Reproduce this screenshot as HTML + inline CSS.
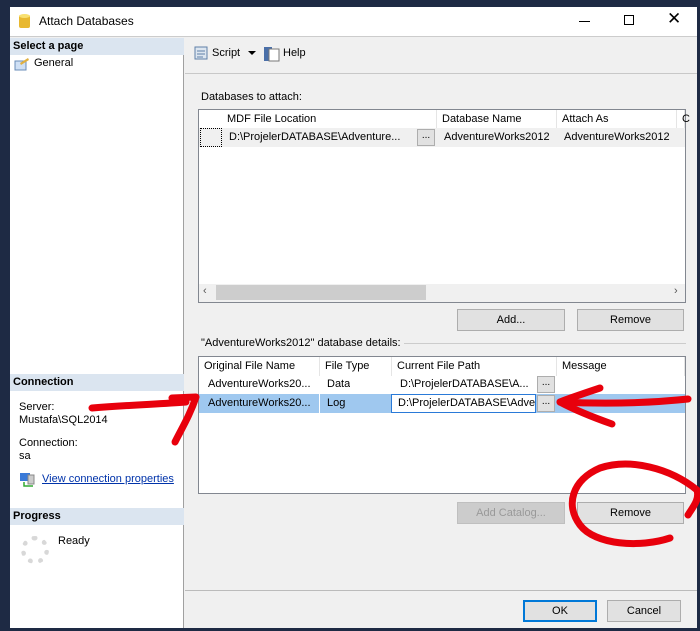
<!DOCTYPE html>
<html><head><meta charset="utf-8"><style>
*{box-sizing:border-box;margin:0;padding:0}
body{width:700px;height:631px;background:#1e2a44;font-family:"Liberation Sans",sans-serif;font-size:11px;color:#000;position:relative;overflow:hidden}
.a{position:absolute}
.btn{position:absolute;background:#e1e1e1;border:1px solid #adadad;text-align:center;line-height:20px;font-size:11px}
.hd{position:absolute;background:#fff;border-right:1px solid #e5e5e5;line-height:19px;padding-left:5px;height:19px}
.cell{position:absolute;line-height:19px;height:19px;padding-left:5px;white-space:nowrap;overflow:hidden}
.dots{position:absolute;width:18px;height:17px;background:#e1e1e1;border:1px solid #adadad;font-size:10px;text-align:center;line-height:12px}
</style></head><body>
<div class="a" style="left:10px;top:7px;width:687px;height:621px;background:#f0f0f0"></div>
<!-- title -->
<div class="a" style="left:10px;top:7px;width:687px;height:30px;background:#fff;border-bottom:1px solid #ccc"></div>
<svg class="a" style="left:18px;top:13px" width="14" height="17"><rect x="1" y="2" width="11" height="13" rx="2" fill="#e8b830"/><ellipse cx="6.5" cy="3" rx="5.5" ry="2" fill="#f8e070"/></svg>
<div class="a" style="left:39px;top:14px;font-size:12px">Attach Databases</div>
<div class="a" style="left:579px;top:21px;width:11px;height:1px;background:#000"></div>
<div class="a" style="left:624px;top:15px;width:10px;height:10px;border:1px solid #000"></div>
<div class="a" style="left:667px;top:9px;font-size:17px;font-weight:300">✕</div>
<!-- left panel -->
<div class="a" style="left:10px;top:38px;width:174px;height:590px;background:#fff;border-right:1px solid #a0a0a0"></div>
<div class="a" style="left:10px;top:38px;width:174px;height:17px;background:#dbe5f0;font-weight:bold;padding-left:3px;line-height:17px">Select a page</div>
<svg class="a" style="left:14px;top:57px" width="16" height="14"><rect x="1" y="4" width="11" height="9" fill="#cfe0f5" stroke="#6a8cb8"/><path d="M6 6l8-5 1 2-8 5z" fill="#e0b040"/></svg>
<div class="a" style="left:34px;top:57px">General</div>
<div class="a" style="left:10px;top:374px;width:174px;height:17px;background:#dbe5f0;font-weight:bold;padding-left:3px;line-height:17px">Connection</div>
<div class="a" style="left:19px;top:401px;line-height:13px">Server:<br>Mustafa\SQL2014</div>
<div class="a" style="left:19px;top:437px;line-height:13px">Connection:<br>sa</div>
<svg class="a" style="left:19px;top:472px" width="18" height="16"><rect x="1" y="1" width="10" height="8" fill="#3a7ad8"/><rect x="9" y="3" width="6" height="9" fill="#ccc" stroke="#888"/><path d="M5 10v4h9" stroke="#3a3" fill="none" stroke-width="1.5"/></svg>
<div class="a" style="left:42px;top:473px;color:#0033aa;text-decoration:underline">View connection properties</div>
<div class="a" style="left:10px;top:508px;width:174px;height:17px;background:#dbe5f0;font-weight:bold;padding-left:3px;line-height:17px">Progress</div>
<div class="a" style="left:21px;top:536px;width:28px;height:28px;border-radius:50%;border:5px dotted #d8d8d8"></div>
<div class="a" style="left:58px;top:535px">Ready</div>
<!-- toolbar -->
<div class="a" style="left:185px;top:73px;width:512px;height:1px;background:#c8c8c8"></div>
<svg class="a" style="left:192px;top:45px" width="18" height="18"><path d="M3 2h12v12H3z" fill="#dde6f0" stroke="#6080a8"/><path d="M5 6h8M5 9h8M5 12h6" stroke="#6080a8"/></svg>
<div class="a" style="left:212px;top:47px">Script</div>
<div class="a" style="left:248px;top:51px;border:4px solid transparent;border-top:4px solid #000"></div>
<svg class="a" style="left:263px;top:45px" width="18" height="18"><rect x="1" y="2" width="8" height="14" fill="#4a6fa8"/><rect x="6" y="4" width="10" height="12" fill="#fff" stroke="#777"/></svg>
<div class="a" style="left:283px;top:47px">Help</div>
<!-- grid1 -->
<div class="a" style="left:201px;top:91px">Databases to attach:</div>
<div class="a" style="left:198px;top:109px;width:488px;height:194px;background:#fff;border:1px solid #828790"></div>
<div class="hd" style="left:222px;top:110px;width:215px">MDF File Location</div>
<div class="hd" style="left:437px;top:110px;width:120px">Database Name</div>
<div class="hd" style="left:557px;top:110px;width:120px">Attach As</div>
<div class="hd" style="left:677px;top:110px;width:8px">C</div>
<div class="a" style="left:199px;top:128px;width:486px;height:19px;background:#f0f0f0"></div>
<div class="a" style="left:200px;top:128px;width:22px;height:19px;border:1px dotted #000"></div>
<div class="cell" style="left:224px;top:128px">D:\ProjelerDATABASE\Adventure...</div>
<div class="dots" style="left:417px;top:129px">...</div>
<div class="cell" style="left:439px;top:128px">AdventureWorks2012</div>
<div class="cell" style="left:559px;top:128px">AdventureWorks2012</div>
<div class="a" style="left:199px;top:284px;width:486px;height:18px;background:#f0f0f0"></div>
<div class="a" style="left:216px;top:285px;width:210px;height:15px;background:#cdcdcd"></div>
<div class="a" style="left:203px;top:285px;color:#555">‹</div>
<div class="a" style="left:674px;top:285px;color:#555">›</div>
<div class="btn" style="left:457px;top:309px;width:108px;height:22px">Add...</div>
<div class="btn" style="left:577px;top:309px;width:107px;height:22px">Remove</div>
<!-- grid2 -->
<div class="a" style="left:201px;top:337px;background:#f0f0f0;padding-right:4px">"AdventureWorks2012" database details:</div>
<div class="a" style="left:404px;top:343px;width:282px;height:1px;background:#ccc;z-index:-0"></div>
<div class="a" style="left:198px;top:356px;width:488px;height:138px;background:#fff;border:1px solid #828790"></div>
<div class="hd" style="left:199px;top:357px;width:121px">Original File Name</div>
<div class="hd" style="left:320px;top:357px;width:72px">File Type</div>
<div class="hd" style="left:392px;top:357px;width:165px">Current File Path</div>
<div class="hd" style="left:557px;top:357px;width:128px">Message</div>
<div class="cell" style="left:203px;top:375px">AdventureWorks20...</div>
<div class="cell" style="left:322px;top:375px">Data</div>
<div class="cell" style="left:395px;top:375px">D:\ProjelerDATABASE\A...</div>
<div class="dots" style="left:537px;top:376px">...</div>
<div class="a" style="left:199px;top:394px;width:486px;height:19px;background:#9fc8ef"></div>
<div class="a" style="left:319px;top:394px;width:1px;height:19px;background:#fff"></div>
<div class="cell" style="left:203px;top:394px">AdventureWorks20...</div>
<div class="cell" style="left:322px;top:394px">Log</div>
<div class="a" style="left:391px;top:394px;width:145px;height:19px;background:#fff;border:1px solid #2a7ad8;padding-left:6px;line-height:17px;overflow:hidden;white-space:nowrap">D:\ProjelerDATABASE\Adve</div>
<div class="dots" style="left:537px;top:395px">...</div>
<div class="btn" style="left:457px;top:502px;width:108px;height:22px;background:#ccc;color:#999;border-color:#bfbfbf">Add Catalog...</div>
<div class="btn" style="left:577px;top:502px;width:107px;height:22px">Remove</div>
<div class="a" style="left:185px;top:590px;width:512px;height:1px;background:#bbb"></div>
<div class="btn" style="left:523px;top:600px;width:74px;height:22px;border:2px solid #0078d7;line-height:18px">OK</div>
<div class="btn" style="left:607px;top:600px;width:74px;height:22px">Cancel</div>
<!-- red markup -->
<svg class="a" style="left:0;top:0" width="700" height="631" fill="none" stroke="#e8000c" stroke-width="7" stroke-linecap="round" stroke-linejoin="round">
<path d="M92 408 C130 405 160 404 186 402"/>
<path d="M172 398 L196 397 C190 415 182 428 175 442"/>
<path d="M560 402 C600 404 640 404 688 399"/>
<path d="M600 388 C585 393 570 398 560 402 C575 410 595 418 612 424"/>
<path d="M670 538 C640 548 595 545 580 525 C565 505 572 480 600 468 C630 458 670 468 697 490 C700 500 692 508 688 515"/>
</svg>
</body></html>
